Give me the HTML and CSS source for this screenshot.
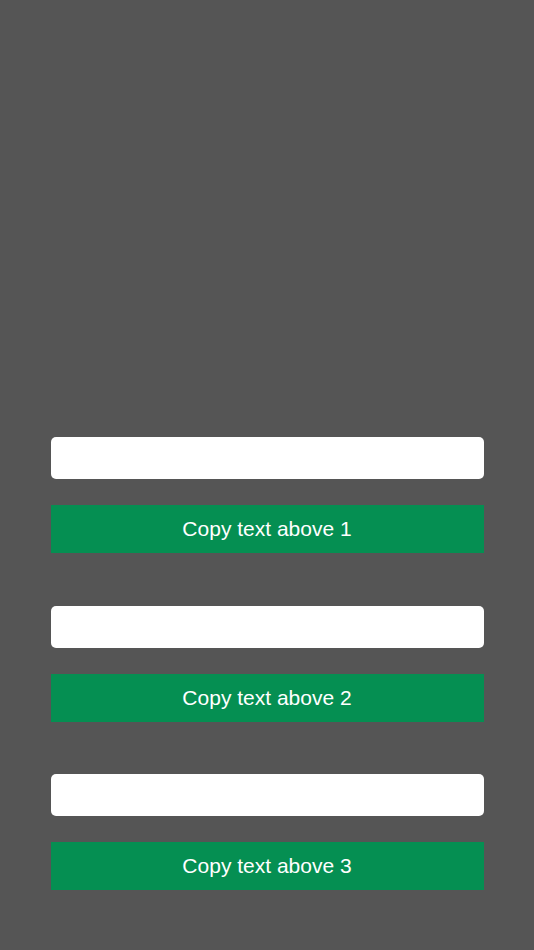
FILE: index.html
```html
<!DOCTYPE html>
<html>
<head>
<meta charset="utf-8">
<link rel="stylesheet" href="styles.css">
</head>
<body>
<main class="screen">
  <section class="group">
    <div class="field"></div>
    <button class="copy-btn">Copy text above 1</button>
  </section>
  <section class="group">
    <div class="field"></div>
    <button class="copy-btn">Copy text above 2</button>
  </section>
  <section class="group">
    <div class="field"></div>
    <button class="copy-btn">Copy text above 3</button>
  </section>
</main>
</body>
</html>
```
FILE: styles.css
```css
html, body {
  margin: 0;
  padding: 0;
  background: #555555;
}
.screen {
  width: 534px;
  height: 950px;
  box-sizing: border-box;
  padding: 437px 50.5px 0 50.5px;
  display: flex;
  flex-direction: column;
  gap: 52.5px;
  font-family: "Liberation Sans", Arial, sans-serif;
}
.group {
  display: flex;
  flex-direction: column;
  gap: 26px;
}
.field {
  height: 42px;
  background: #ffffff;
  border-radius: 5px;
}
.copy-btn {
  height: 48px;
  border: none;
  margin: 0;
  padding: 0;
  background: #058f52;
  color: #ffffff;
  font-family: "Liberation Sans", Arial, sans-serif;
  font-size: 21px;
  text-align: center;
}
```
